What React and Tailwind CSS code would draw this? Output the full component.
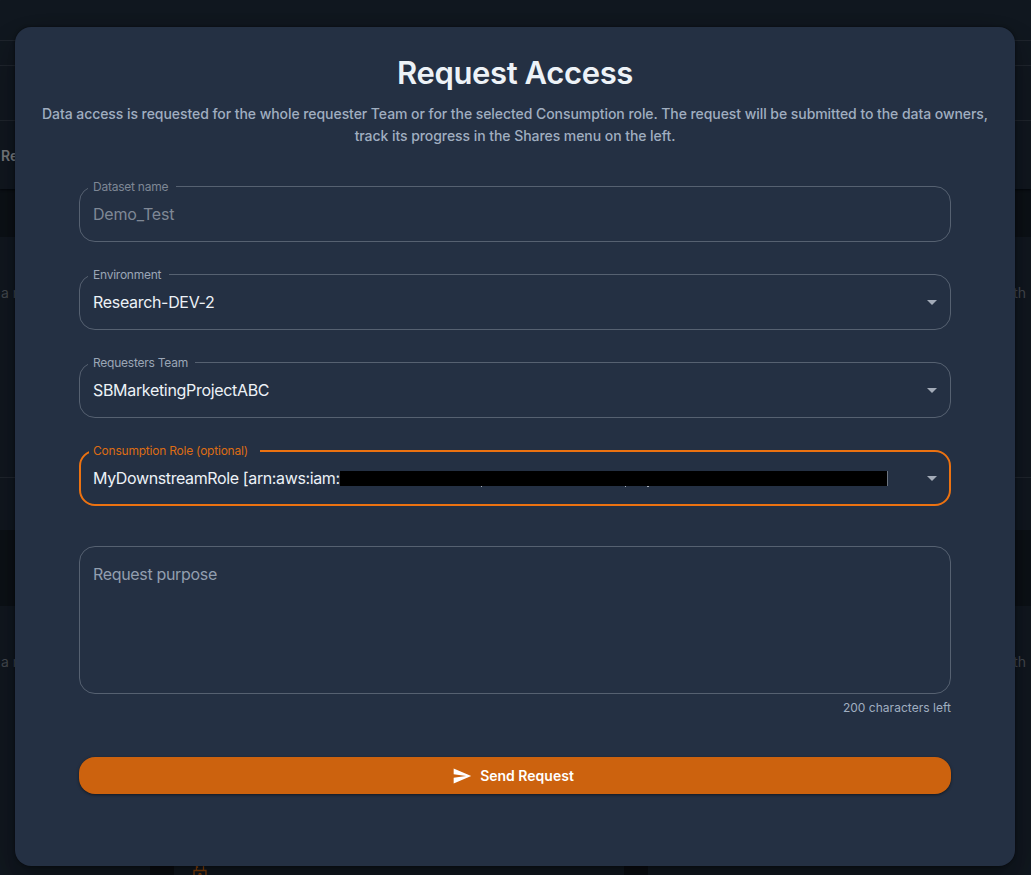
import React from "react";

function Caret() {
  return (
    <svg className="size-6 shrink-0 fill-[#a3abb8]" viewBox="0 0 24 24">
      <path d="M7 10l5 5 5-5z" />
    </svg>
  );
}

function Field({ label, value, select, muted }) {
  return (
    <fieldset className="h-[61px] min-w-0 rounded-[16px] border border-[#566171] px-2">
      <legend
        className={`h-[11px] pl-[5px] text-[12px] leading-[11px] tracking-[-0.24px] whitespace-nowrap ${
          muted ? "pr-[8px] text-[#7e8795]" : "pr-[7.500px] text-[#9ba6b6]"
        }`}
      >
        {label}
      </legend>
      <div className="-mr-[2px] flex h-[44px] items-center justify-between pl-[5px]">
        <span
          className={`text-[16px] leading-6 ${
            muted ? "tracking-[-0.18px] text-[#7f8896]" : "tracking-[-0.32px] text-[#edf2f7]"
          }`}
        >
          {value}
        </span>
        {select && <Caret />}
      </div>
    </fieldset>
  );
}

function RoleField() {
  return (
    <fieldset className="h-[61px] min-w-0 rounded-[16px] border-2 border-[#ec7211] px-2">
      <legend className="h-[11px] pr-[12px] pl-[4px] text-[12px] leading-[11px] tracking-[-0.22px] whitespace-nowrap text-[#dd6c14]">
        Consumption Role (optional)
      </legend>
      <div className="-mr-[3px] flex h-[43px] items-center justify-between pl-[4px]">
        <div className="flex items-center text-[16px] leading-6 text-[#edf2f7]">
          <span className="w-[247px] tracking-[-0.38px] whitespace-nowrap">MyDownstreamRole [arn:aws:iam:</span>
          <span className="relative mt-px h-[15px] w-[548px] border-r border-[#6d7581] bg-black">
            <span className="absolute top-full left-[141px] h-px w-px bg-[#aab2bd]" />
            <span className="absolute top-full left-[285px] h-px w-px bg-[#aab2bd]" />
            <span className="absolute top-full left-[307px] h-px w-[2px] bg-[#aab2bd]" />
          </span>
        </div>
        <Caret />
      </div>
    </fieldset>
  );
}

function CatalogRow({ className }) {
  return (
    <div className={`flex items-start justify-between px-px text-[14px] leading-5 text-[#454a51] ${className}`}>
      <span>a request</span>
      <span className="pr-1">with</span>
    </div>
  );
}

function Backdrop() {
  return (
    <div className="flex h-full flex-col bg-[#0c1117]">
      <div className="h-[189px] shrink-0 bg-[#111820] shadow-[0_1px_2px_#05080c]">
        <div className="h-[41px] border-b border-[#20262e]" />
        <div className="h-[25px] border-b border-[#20262e]" />
        <div className="h-[55px] border-b border-[#20262e]" />
        <div className="px-px pt-[25px] text-[14px] leading-5 font-semibold text-[#797c80]">Requests</div>
      </div>
      <div className="mt-[48px] h-[293px] shrink-0 bg-[#111820]">
        <CatalogRow className="h-[241px] border-b border-[#20262e] pt-[46px]" />
      </div>
      <div className="mt-[76px] h-[249px] shrink-0 bg-[#111820]">
        <CatalogRow className="pt-[46px]" />
      </div>
    </div>
  );
}

function BottomCards() {
  return (
    <div className="absolute inset-x-0 bottom-0 flex h-[20px] gap-6 overflow-hidden bg-[#0b0f13]">
      <div className="w-[150px] bg-[#111820]" />
      <div className="w-[450px] bg-[#111820] pt-[6px] pl-[17px]">
        <svg className="size-[18px] fill-none stroke-[#8a430a]" viewBox="0 0 18 18" strokeWidth="1.3">
          <path d="M3 18V9.500h12V18M5.500 9.500V5a3.500 3.500 0 0 1 7 0v4.500M6.500 5v2" />
          <circle cx="9" cy="13.500" r="1" />
        </svg>
      </div>
      <div className="flex-1 bg-[#111820]" />
    </div>
  );
}

export default function App() {
  return (
    <div className="relative h-[875px] w-[1031px] overflow-hidden font-['Inter',sans-serif]">
      <Backdrop />
      <BottomCards />
      <div className="absolute top-[27px] left-[15px] h-[839px] w-[1000px] rounded-[16px] bg-[#243043] px-6 pt-6 shadow-[0_11px_15px_-7px_rgba(0,0,0,0.2),0_24px_38px_3px_rgba(0,0,0,0.14),0_9px_46px_8px_rgba(0,0,0,0.12),0_0_3px_rgba(0,0,0,0.5)]">
        <h1 className="text-center text-[31px] leading-[44px] font-semibold tracking-[-0.38px] text-[#edf2f7]">
          Request Access
        </h1>
        <p className="mt-2 text-center text-[14px] leading-[22px] font-medium tracking-[-0.06px] whitespace-nowrap text-[#a0aec0]">
          Data access is requested for the whole requester Team or for the selected Consumption role. The request will
          be submitted to the data owners,
          <br />
          track its progress in the Shares menu on the left.
        </p>
        <div className="mt-[34px] flex flex-col gap-[27px] px-10">
          <Field label="Dataset name" value="Demo_Test" muted />
          <Field label="Environment" value="Research-DEV-2" select />
          <Field label="Requesters Team" value="SBMarketingProjectABC" select />
          <RoleField />
        </div>
        <div className="px-10 pt-[40px]">
          <div className="h-[148px] rounded-[16px] border border-[#566171] px-[13px] pt-[15px] text-[16px] leading-6 tracking-[-0.33px] text-[#929eaf]">
            Request purpose
          </div>
          <div className="mt-[4px] text-right text-[12px] leading-5 tracking-[0.03px] text-[#a0aec0]">
            200 characters left
          </div>
          <button className="mt-[39px] flex h-[37px] w-full items-center justify-center gap-2 rounded-[16px] bg-[#cc620e] pr-1 text-[14px] font-semibold text-white shadow-[0_1px_3px_rgba(0,0,0,0.5)]">
            <svg className="size-5 fill-current" viewBox="0 0 24 24">
              <path d="M2.010 21L23 12 2.010 3 2 10l15 2-15 2z" />
            </svg>
            Send Request
          </button>
        </div>
      </div>
    </div>
  );
}
